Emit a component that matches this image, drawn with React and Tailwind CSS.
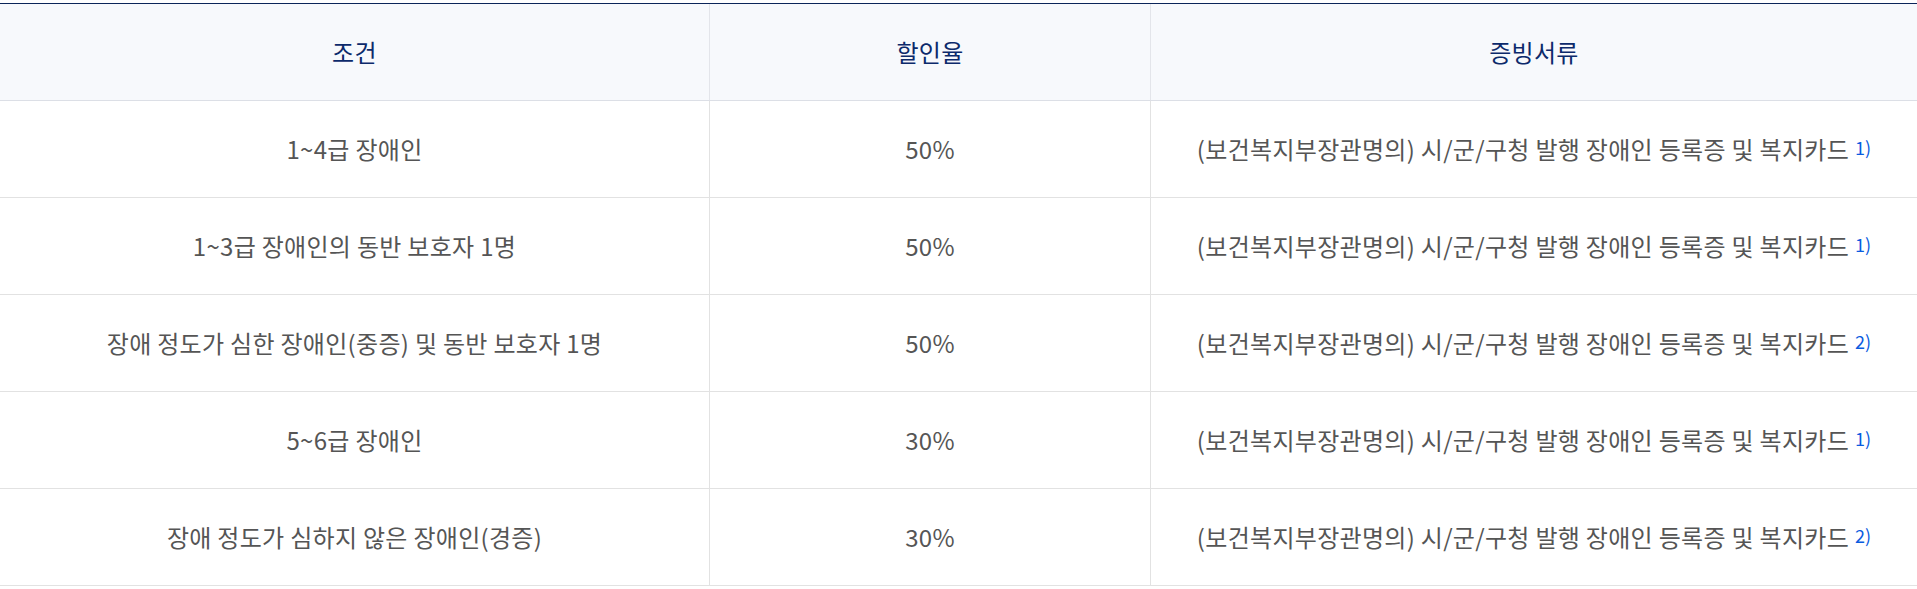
import React from 'react';

const rows = [
  { cond: '1~4급 장애인', rate: '50%', note: '1)' },
  { cond: '1~3급 장애인의 동반 보호자 1명', rate: '50%', note: '1)' },
  { cond: '장애 정도가 심한 장애인(중증) 및 동반 보호자 1명', rate: '50%', note: '2)' },
  { cond: '5~6급 장애인', rate: '30%', note: '1)' },
  { cond: '장애 정도가 심하지 않은 장애인(경증)', rate: '30%', note: '2)' },
];

const doc = '(보건복지부장관명의) 시/군/구청 발행 장애인 등록증 및 복지카드';

export default function App() {
  return (
    <div className="bg-white pt-[3px] font-['Noto_Sans_CJK_KR','Noto_Sans',sans-serif] tracking-[0.3px]">
      <div className="border-t border-[#0b2559]">
        <div className="grid grid-cols-[709px_441px_1fr] h-[97px] bg-[#f7f9fc] border-b border-[#dcdfe6] text-[24px] text-[#0c2a6b]">
          <div className="flex items-center justify-center">조건</div>
          <div className="flex items-center justify-center border-l border-[#e3e5ea]">할인율</div>
          <div className="flex items-center justify-center border-l border-[#e3e5ea]">증빙서류</div>
        </div>
        {rows.map((r, i) => (
          <div key={i} className="grid grid-cols-[709px_441px_1fr] h-[97px] border-b border-[#e2e2e2] text-[24px] text-[#555555]">
            <div className="flex items-center justify-center">{r.cond}</div>
            <div className="flex items-center justify-center border-l border-[#e2e2e2]">{r.rate}</div>
            <div className="flex items-center justify-center border-l border-[#e2e2e2]">
              {doc}
              <span className="ml-[6px] mb-[3px] text-[18px] text-[#0a5be0] tracking-normal">{r.note}</span>
            </div>
          </div>
        ))}
      </div>
    </div>
  );
}
